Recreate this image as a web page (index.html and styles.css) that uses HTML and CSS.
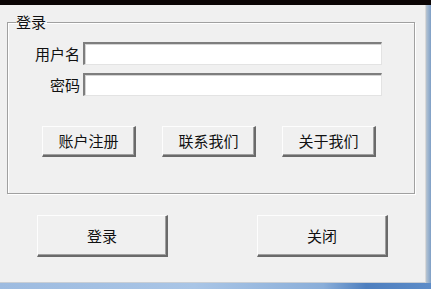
FILE: index.html
```html
<!DOCTYPE html>
<html lang="zh-CN">
<head>
<meta charset="utf-8">
<title>登录</title>
<link rel="stylesheet" href="styles.css">
</head>
<body>
<div class="window">
  <div class="caption"></div>
  <div class="middle">
    <div class="client">
      <fieldset class="group">
        <legend class="group-title">登录</legend>
        <div class="form">
          <label class="field-label" for="user">用户名</label>
          <input class="field" id="user" type="text">
          <label class="field-label" for="pwd">密码</label>
          <input class="field" id="pwd" type="password">
        </div>
        <div class="links">
          <button class="btn btn-small">账户注册</button>
          <button class="btn btn-small">联系我们</button>
          <button class="btn btn-small">关于我们</button>
        </div>
      </fieldset>
      <div class="actions">
        <button class="btn btn-big">登录</button>
        <button class="btn btn-big">关闭</button>
      </div>
    </div>
    <div class="frame-right"></div>
  </div>
  <div class="frame-bottom"></div>
</div>
</body>
</html>
```
FILE: styles.css
```css
* { box-sizing: border-box; }
html, body {
  margin: 0;
  padding: 0;
  background: #f0f0f0;
}
body {
  font-family: "Noto Sans CJK SC", "Noto Sans", sans-serif;
  font-size: 15px;
  color: #111;
}
.window {
  width: 431px;
  height: 289px;
  display: flex;
  flex-direction: column;
  overflow: hidden;
}
.caption {
  height: 5px;
  background: #0b0505;
  flex: none;
}
.middle {
  flex: 1;
  display: flex;
  min-height: 0;
}
.client {
  flex: 1;
  background: #f0f0f0;
  padding: 8px 0 0 7px;
  border-right: 1px solid #d9d9d9;
  border-bottom: 1px solid #c9ced4;
}
.frame-right {
  width: 5px;
  flex: none;
  background: linear-gradient(90deg, #b9c4cf, #9fb6cf 40%, #7f9fc6);
}
.frame-bottom {
  height: 6px;
  flex: none;
  background: linear-gradient(90deg, #9dbbe0 0%, #a9c5e6 45%, #8aaed9 75%, #4e7fbf 85%, #5d8cc8 100%);
}
.group {
  margin: 0;
  width: 408px;
  height: 181px;
  border: 1px solid #a0a0a0;
  box-shadow: inset 1px 1px #ffffff, 1px 1px #ffffff;
  padding: 0;
}
.group-title {
  margin-left: 8px;
  padding: 0 1px 0 0;
  line-height: 18px;
  font-size: 15px;
}
.form {
  display: grid;
  grid-template-columns: 72px 299px;
  column-gap: 3px;
  row-gap: 8px;
  align-items: center;
  padding-top: 11px;
}
.field-label {
  text-align: right;
  line-height: 18px;
}
.field {
  height: 23px;
  margin: 0;
  padding: 0 3px;
  background: #fff;
  border-top: 2px solid #7e7e7e;
  border-left: 2px solid #7e7e7e;
  border-right: 1px solid #e3e3e3;
  border-bottom: 1px solid #e3e3e3;
  box-shadow: inset 1px 1px #d4d4d4;
  outline: none;
  font: inherit;
}
.links {
  display: flex;
  gap: 26px;
  padding: 30px 0 0 34px;
}
.btn {
  margin: 0;
  padding: 0;
  background: #f0f0f0;
  border-top: 1px solid #fdfdfd;
  border-left: 1px solid #fdfdfd;
  border-right: 2px solid #6a6a6a;
  border-bottom: 2px solid #6a6a6a;
  box-shadow: inset -1px -1px #a0a0a0, 0 0 0 0 transparent;
  font: inherit;
  color: #111;
  line-height: 18px;
}
.btn-small {
  width: 94px;
  height: 31px;
}
.actions {
  display: flex;
  gap: 89px;
  padding: 21px 0 0 30px;
}
.btn-big {
  width: 131px;
  height: 42px;
}
```
